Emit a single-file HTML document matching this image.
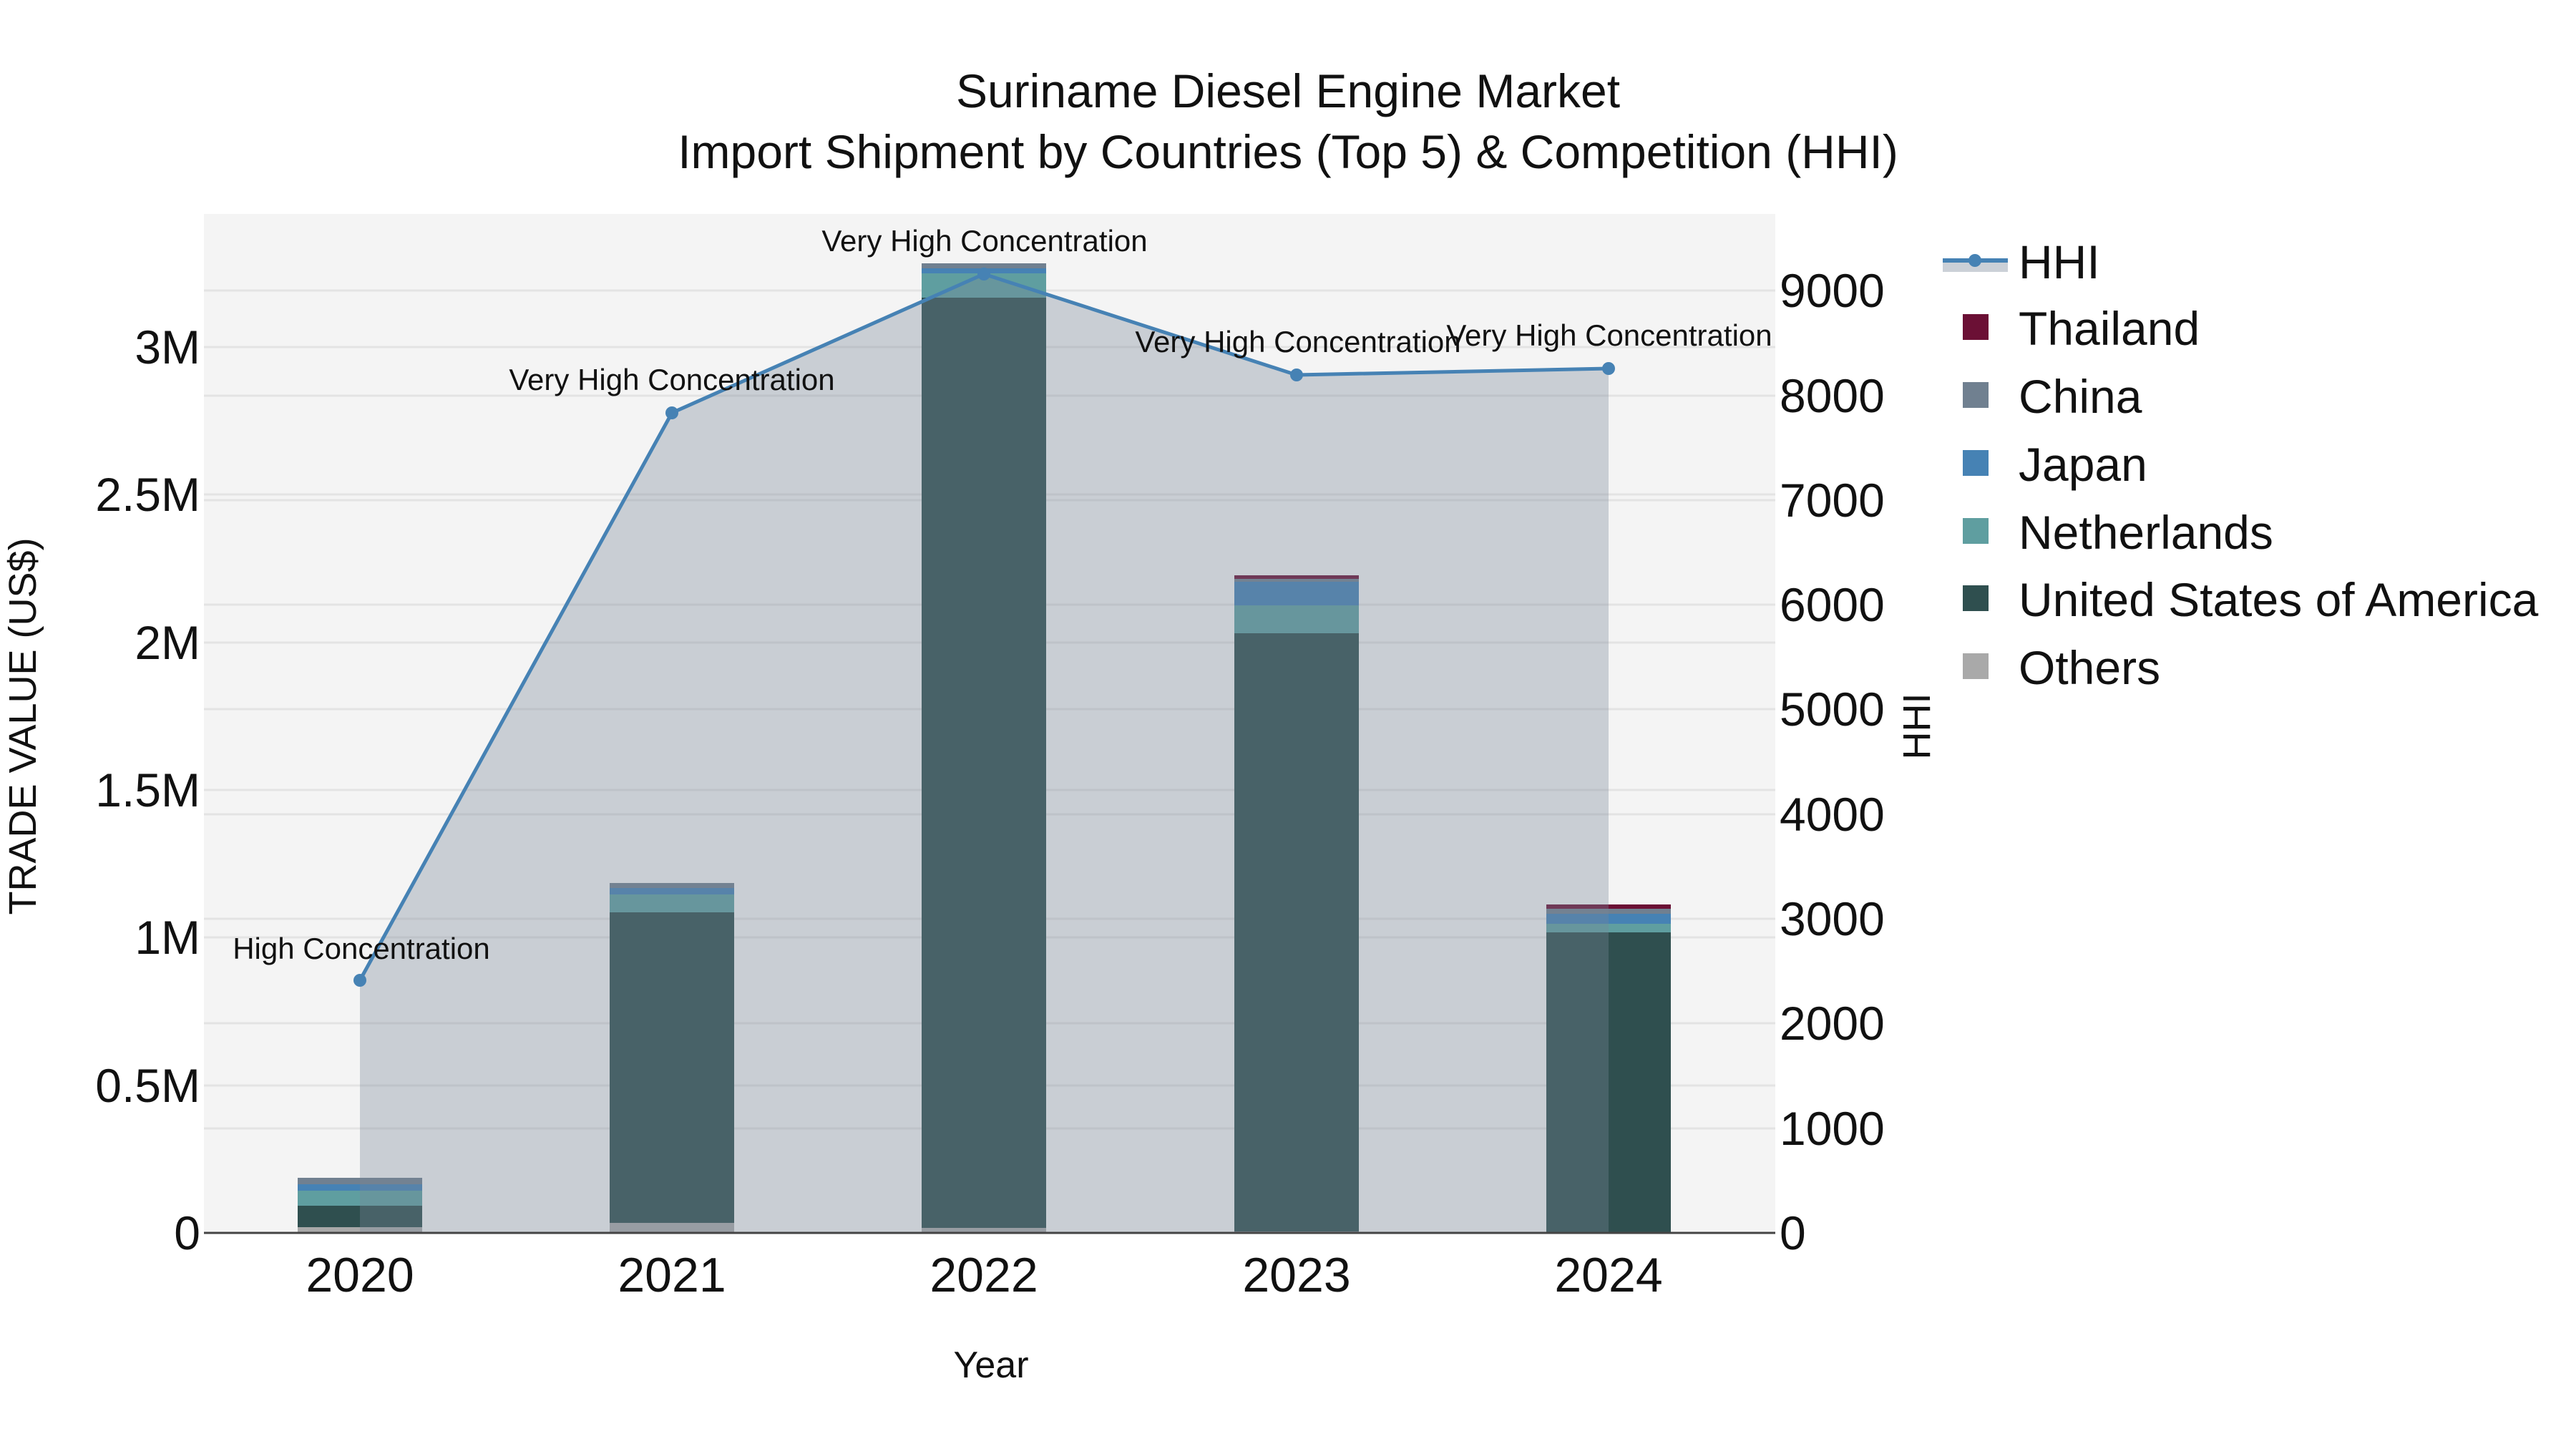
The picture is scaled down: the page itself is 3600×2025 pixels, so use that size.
<!DOCTYPE html>
<html><head><meta charset="utf-8"><style>html,body{margin:0;padding:0;background:#fff}svg{display:block}text{font-family:"Liberation Sans",sans-serif;fill:#111}</style></head>
<body>
<svg width="3600" height="2025" viewBox="0 0 3600 2025" xmlns="http://www.w3.org/2000/svg">
<rect x="285" y="299" width="2196" height="1424" fill="#f4f4f4"/>
<g stroke="#e3e3e3" stroke-width="3">
<line x1="285" x2="2481" y1="1517" y2="1517"/><line x1="285" x2="2481" y1="1310" y2="1310"/><line x1="285" x2="2481" y1="1104" y2="1104"/><line x1="285" x2="2481" y1="898" y2="898"/><line x1="285" x2="2481" y1="691" y2="691"/><line x1="285" x2="2481" y1="485" y2="485"/>
<line x1="285" x2="2481" y1="1577" y2="1577"/><line x1="285" x2="2481" y1="1430" y2="1430"/><line x1="285" x2="2481" y1="1284" y2="1284"/><line x1="285" x2="2481" y1="1138" y2="1138"/><line x1="285" x2="2481" y1="991" y2="991"/><line x1="285" x2="2481" y1="845" y2="845"/><line x1="285" x2="2481" y1="699" y2="699"/><line x1="285" x2="2481" y1="553" y2="553"/><line x1="285" x2="2481" y1="406" y2="406"/>
</g>
<g>
<rect x="416" y="1715" width="174" height="8" fill="#a9a9a9"/><rect x="416" y="1685" width="174" height="30" fill="#2f4f4f"/><rect x="416" y="1664" width="174" height="21" fill="#5f9ea0"/><rect x="416" y="1655" width="174" height="9" fill="#4682b4"/><rect x="416" y="1646" width="174" height="9" fill="#708090"/>
<rect x="852" y="1709" width="174" height="14" fill="#a9a9a9"/><rect x="852" y="1275" width="174" height="434" fill="#2f4f4f"/><rect x="852" y="1250" width="174" height="25" fill="#5f9ea0"/><rect x="852" y="1241" width="174" height="9" fill="#4682b4"/><rect x="852" y="1234" width="174" height="7" fill="#708090"/>
<rect x="1288" y="1716" width="174" height="7" fill="#a9a9a9"/><rect x="1288" y="416" width="174" height="1300" fill="#2f4f4f"/><rect x="1288" y="382" width="174" height="34" fill="#5f9ea0"/><rect x="1288" y="375" width="174" height="7" fill="#4682b4"/><rect x="1288" y="368" width="174" height="7" fill="#708090"/>
<rect x="1725" y="1721" width="174" height="2" fill="#a9a9a9"/><rect x="1725" y="885" width="174" height="836" fill="#2f4f4f"/><rect x="1725" y="846" width="174" height="39" fill="#5f9ea0"/><rect x="1725" y="813" width="174" height="33" fill="#4682b4"/><rect x="1725" y="809" width="174" height="4" fill="#708090"/><rect x="1725" y="804" width="174" height="5" fill="#6b1035"/>
<rect x="2161" y="1303" width="174" height="420" fill="#2f4f4f"/><rect x="2161" y="1291" width="174" height="12" fill="#5f9ea0"/><rect x="2161" y="1277" width="174" height="14" fill="#4682b4"/><rect x="2161" y="1270" width="174" height="7" fill="#708090"/><rect x="2161" y="1264" width="174" height="6" fill="#6b1035"/>
</g>
<polygon points="503,1723 503,1370 939,577 1375,383 1812,524 2248,515 2248,1723" fill="rgba(119,136,153,0.35)"/>
<line x1="285" x2="2481" y1="1723" y2="1723" stroke="#444" stroke-width="3"/>
<polyline points="503,1370 939,577 1375,383 1812,524 2248,515" fill="none" stroke="#4682b4" stroke-width="5"/>
<g fill="#4682b4"><circle cx="503" cy="1370" r="9"/><circle cx="939" cy="577" r="9"/><circle cx="1375" cy="383" r="9"/><circle cx="1812" cy="524" r="9"/><circle cx="2248" cy="515" r="9"/></g>
<g font-size="42" text-anchor="middle">
<text x="505" y="1340">High Concentration</text>
<text x="939" y="545">Very High Concentration</text>
<text x="1376" y="351">Very High Concentration</text>
<text x="1814" y="492">Very High Concentration</text>
<text x="2249" y="483">Very High Concentration</text>
</g>
<g font-size="66" text-anchor="end">
<text x="280" y="1746">0</text><text x="280" y="1540">0.5M</text><text x="280" y="1333">1M</text><text x="280" y="1127">1.5M</text><text x="280" y="921">2M</text><text x="280" y="714">2.5M</text><text x="280" y="508">3M</text>
</g>
<g font-size="66">
<text x="2487" y="1746">0</text><text x="2487" y="1600">1000</text><text x="2487" y="1453">2000</text><text x="2487" y="1307">3000</text><text x="2487" y="1161">4000</text><text x="2487" y="1014">5000</text><text x="2487" y="868">6000</text><text x="2487" y="722">7000</text><text x="2487" y="576">8000</text><text x="2487" y="429">9000</text>
</g>
<g font-size="68" text-anchor="middle">
<text x="503" y="1805">2020</text><text x="939" y="1805">2021</text><text x="1375" y="1805">2022</text><text x="1812" y="1805">2023</text><text x="2248" y="1805">2024</text>
</g>
<text x="1385" y="1925" font-size="52" text-anchor="middle">Year</text>
<text transform="translate(50,1015) rotate(-90)" font-size="54" text-anchor="middle">TRADE VALUE (US$)</text>
<text transform="translate(2697,1015) rotate(-90)" font-size="54" text-anchor="middle">HHI</text>
<g font-size="66" text-anchor="middle">
<text x="1800" y="150">Suriname Diesel Engine Market</text>
<text x="1800" y="235">Import Shipment by Countries (Top 5) &amp; Competition (HHI)</text>
</g>
<rect x="2715" y="362" width="91" height="18" fill="#cbd0d7"/>
<line x1="2715" x2="2806" y1="364" y2="364" stroke="#4682b4" stroke-width="6"/>
<circle cx="2760" cy="364" r="9" fill="#4682b4"/>
<g>
<rect x="2743" y="439" width="36" height="36" fill="#6b1035"/>
<rect x="2743" y="534" width="36" height="36" fill="#708090"/>
<rect x="2743" y="629" width="36" height="36" fill="#4682b4"/>
<rect x="2743" y="724" width="36" height="36" fill="#5f9ea0"/>
<rect x="2743" y="818" width="36" height="36" fill="#2f4f4f"/>
<rect x="2743" y="913" width="36" height="36" fill="#a9a9a9"/>
</g>
<g font-size="66">
<text x="2821" y="389">HHI</text>
<text x="2821" y="482">Thailand</text>
<text x="2821" y="577">China</text>
<text x="2821" y="672">Japan</text>
<text x="2821" y="767">Netherlands</text>
<text x="2821" y="861">United States of America</text>
<text x="2821" y="956">Others</text>
</g>
</svg>
</body></html>
